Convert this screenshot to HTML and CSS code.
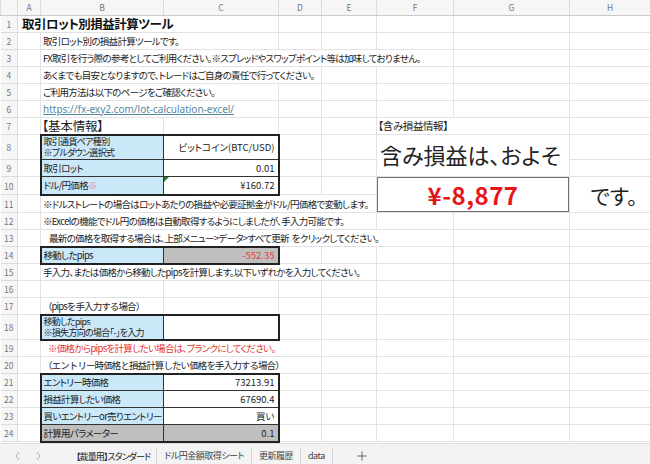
FILE: index.html
```html
<!DOCTYPE html>
<html lang="ja">
<head>
  <meta charset="UTF-8" />
  <meta name="viewport" content="width=device-width, initial-scale=1" />
  <title>取引ロット別損益計算ツール</title>
  <link rel="stylesheet" href="styles.css">
</head>
<body>
  <div class="book">
    <table class="sheet">
      <colgroup>
        <col class="c-rn"><col class="c-a"><col class="c-b"><col class="c-c"><col class="c-d">
        <col class="c-e"><col class="c-f"><col class="c-g"><col class="c-h">
      </colgroup>
      <thead>
        <tr class="colhead">
          <th class="corner"></th><th>A</th><th>B</th><th>C</th><th>D</th><th>E</th><th>F</th><th>G</th><th>H</th>
        </tr>
      </thead>
      <tbody>
        <tr><th>1</th><td colspan="3" class="title">取引ロット別損益計算ツール</td><td></td><td></td><td></td><td></td><td></td></tr>
        <tr><th>2</th><td></td><td colspan="2">取引ロット別の損益計算ツールです。</td><td></td><td></td><td></td><td></td><td></td></tr>
        <tr><th>3</th><td></td><td colspan="5">FX取引を行う際の参考としてご利用ください。※スプレッドやスワップポイント等は加味しておりません。</td><td></td><td></td></tr>
        <tr><th>4</th><td></td><td colspan="3">あくまでも目安となりますので、トレードはご自身の責任で行ってください。</td><td></td><td></td><td></td><td></td></tr>
        <tr><th>5</th><td></td><td colspan="2">ご利用方法は以下のページをご確認ください。</td><td></td><td></td><td></td><td></td><td></td></tr>
        <tr><th>6</th><td></td><td colspan="2"><a class="link" href="#">https://fx-exy2.com/lot-calculation-excel/</a></td><td></td><td></td><td></td><td></td><td></td></tr>
        <tr><th>7</th><td></td><td class="heading">【基本情報】</td><td></td><td></td><td></td><td colspan="2" class="subhead">【含み損益情報】</td><td></td></tr>
        <tr class="tall">
          <th>8</th><td></td>
          <td class="lbl two t-top t-left">取引通貨ペア種別<br>※プルダウン選択式</td>
          <td class="val t-top t-right">ビットコイン(BTC/USD)</td>
          <td></td><td></td>
          <td colspan="2" rowspan="2" class="big">含み損益は、およそ</td>
          <td></td>
        </tr>
        <tr><th>9</th><td></td><td class="lbl t-left">取引ロット</td><td class="val t-right">0.01</td><td></td><td></td><td></td></tr>
        <tr>
          <th>10</th><td></td>
          <td class="lbl t-left t-bottom">ドル/円価格<span class="pink">※</span></td>
          <td class="val t-right t-bottom flagged">¥160.72</td>
          <td></td><td></td>
          <td colspan="2" rowspan="2" class="pl-cell"><div class="pl">¥-8,877</div></td>
          <td rowspan="2" class="desu">です。</td>
        </tr>
        <tr><th>11</th><td></td><td colspan="4">※ドルストレートの場合はロットあたりの損益や必要証拠金がドル/円価格で変動します。</td></tr>
        <tr><th>12</th><td></td><td colspan="4">※Excelの機能でドル円の価格は自動取得するようにしましたが、手入力可能です。</td><td></td><td></td><td></td></tr>
        <tr><th>13</th><td></td><td colspan="5" class="indent">最新の価格を取得する場合は、上部メニュー&gt;データ&gt;すべて更新&nbsp;&nbsp;をクリックしてください。</td><td></td><td></td></tr>
        <tr><th>14</th><td></td><td class="lbl t-all-l">移動したpips</td><td class="val gray red t-all-r">-552.35</td><td></td><td></td><td></td><td></td><td></td></tr>
        <tr><th>15</th><td></td><td colspan="4">手入力、または価格から移動したpipsを計算します。以下いずれかを入力してください。</td><td></td><td></td><td></td></tr>
        <tr><th>16</th><td></td><td></td><td></td><td></td><td></td><td></td><td></td><td></td></tr>
        <tr><th>17</th><td></td><td><span class="uline">（pipsを手入力する場合）</span></td><td></td><td></td><td></td><td></td><td></td><td></td></tr>
        <tr class="tall"><th>18</th><td></td><td class="lbl two t-all-l">移動したpips<br>※損失方向の場合「-」を入力</td><td class="val t-all-r"></td><td></td><td></td><td></td><td></td><td></td></tr>
        <tr><th>19</th><td></td><td colspan="3" class="warn">※価格からpipsを計算したい場合は、ブランクにしてください。</td><td></td><td></td><td></td><td></td></tr>
        <tr><th>20</th><td></td><td colspan="3"><span class="uline">（エントリー時価格と損益計算したい価格を手入力する場合）</span></td><td></td><td></td><td></td><td></td></tr>
        <tr><th>21</th><td></td><td class="lbl t-top t-left">エントリー時価格</td><td class="val t-top t-right">73213.91</td><td></td><td></td><td></td><td></td><td></td></tr>
        <tr><th>22</th><td></td><td class="lbl t-left">損益計算したい価格</td><td class="val t-right">67690.4</td><td></td><td></td><td></td><td></td><td></td></tr>
        <tr><th>23</th><td></td><td class="lbl t-left">買いエントリーor売りエントリー</td><td class="val t-right">買い</td><td></td><td></td><td></td><td></td><td></td></tr>
        <tr><th>24</th><td></td><td class="lbl gray t-left t-bottom">計算用パラメーター</td><td class="val gray t-right t-bottom">0.1</td><td></td><td></td><td></td><td></td><td></td></tr>
      </tbody>
    </table>

    <div class="tabs">
      <span class="nav"><svg width="8" height="10" viewBox="0 0 8 10"><polyline points="5,1 2,5 5,9" fill="none" stroke="#aaa" stroke-width="1"/></svg></span>
      <span class="nav"><svg width="8" height="10" viewBox="0 0 8 10"><polyline points="3,1 6,5 3,9" fill="none" stroke="#aaa" stroke-width="1"/></svg></span>
      <span class="tab active">【裁量用】スタンダード</span>
      <span class="tab">ドル円金額取得シート</span>
      <span class="tab">更新履歴</span>
      <span class="tab">data</span>
      <span class="add"><svg width="10" height="10" viewBox="0 0 10 10"><path d="M5 0.5V9.5M0.5 5H9.5" stroke="#666" stroke-width="1"/></svg></span>
    </div>
  </div>
</body>
</html>
```

FILE: styles.css
```css
body {
  margin: 0;
  font-family: "Noto Sans CJK JP", "Noto Sans", sans-serif;
  font-feature-settings: "palt";
  font-size: 9.5px;
  letter-spacing: -0.7px;
  color: #222;
  background: #fff;
  overflow: hidden;
}
.book {
  width: 650px;
  height: 464px;
  overflow: hidden;
}
.sheet {
  border-collapse: collapse;
  table-layout: fixed;
  width: 650px;
}
.c-rn { width: 17px; }
.c-a { width: 23px; }
.c-b { width: 123px; }
.c-c { width: 115px; }
.c-d { width: 43px; }
.c-e { width: 55px; }
.c-f { width: 77px; }
.c-g { width: 116px; }
.c-h { width: 81px; }

.sheet tr { height: 17px; }
.sheet tr.tall { height: 25px; }
.sheet tr.colhead { height: 15px; }

.sheet td, .sheet th {
  border: 1px solid #e2e2e2;
  padding: 0 2px;
  white-space: nowrap;
  overflow: hidden;
  line-height: 12px;
  text-align: left;
  vertical-align: middle;
}
.sheet th {
  background: #f6f6f6;
  color: #777;
  font-weight: normal;
  font-size: 8.5px;
  letter-spacing: 0;
  text-align: center;
  padding: 0;
  border-color: #dcdcdc;
}
.colhead th {
  border-top: none;
  border-bottom-color: #c9c9c9;
}
.sheet tbody th { border-left: none; }

.sheet .title {
  font-size: 12.5px;
  font-weight: bold;
  letter-spacing: -0.5px;
  padding-left: 4px;
  color: #111;
}
.link {
  color: #55899f;
  font-family: "Noto Sans", sans-serif;
  letter-spacing: 0;
  text-decoration: underline;
  font-size: 10px;
}
.sheet .heading {
  font-size: 12.5px;
  line-height: 16px;
  letter-spacing: -0.2px;
  padding-left: 1px;
}
.sheet .subhead { font-size: 10.5px; letter-spacing: -0.4px; padding-left: 1px; }
.sheet .indent { padding-left: 8px; }
.sheet .warn { color: #e4342f; padding-left: 7px; }
.uline {
  border-bottom: 1px solid #333;
  padding-bottom: 1px;
  font-feature-settings: normal;
  letter-spacing: -0.9px;
}

/* input tables */
.lbl { background: #cbe8f8; }
.sheet .two { font-size: 9px; line-height: 11.5px; }
.sheet .val {
  text-align: right;
  padding-right: 3px;
  letter-spacing: 0;
}
.gray { background: #bfbfbf; }
.red { color: #e34234; }
.pink { color: #f07aa0; }
.sheet .t-top { border-top: 2px solid #222; }
.sheet .t-left { border-left: 2px solid #222; border-right: 1px solid #333; border-bottom-color: #333; }
.sheet .t-right { border-right: 2px solid #222; border-bottom-color: #333; }
.sheet .t-bottom { border-bottom: 2px solid #222; }
.sheet .t-all-l { border: 2px solid #222; border-right: 1px solid #333; }
.sheet .t-all-r { border: 2px solid #222; border-left: 1px solid #333; }
.flagged { position: relative; }
.flagged::before {
  content: "";
  position: absolute;
  left: 0;
  top: 0;
  border-top: 5px solid #2e7d32;
  border-right: 5px solid transparent;
}

/* unrealized P/L block */
.sheet .big {
  font-size: 22px;
  line-height: 24px;
  letter-spacing: 0;
  padding-left: 3px;
  padding-bottom: 4px;
  color: #222;
}
.sheet .pl-cell { padding: 0; }
.pl {
  height: 33px;
  border: 1px solid #707070;
  display: flex;
  align-items: center;
  justify-content: center;
  color: #e8141b;
  font-weight: bold;
  font-size: 24px;
  letter-spacing: 0.5px;
}
.sheet .desu {
  font-size: 21px;
  letter-spacing: 0;
  text-align: center;
  padding-left: 10px;
  color: #222;
}

/* sheet tabs */
.tabs {
  height: 25px;
  background: #f3f3f3;
  border-top: 1px solid #dedede;
  display: flex;
  align-items: center;
  color: #444;
  font-size: 9px;
  letter-spacing: -0.5px;
}
.nav {
  width: 20px;
  display: flex;
  justify-content: center;
}
.nav:first-child { margin-left: 8px; }
.tab {
  padding: 0 7px;
  height: 14px;
  line-height: 14px;
  border-right: 1px solid #d0d0d0;
}
.tab.active {
  margin-left: 26px;
  padding: 0 4px 0 2px;
  height: 25px;
  line-height: 25px;
  letter-spacing: -0.9px;
  color: #222;
  border-right: none;
  position: relative;
}
.tab.active::after {
  content: "";
  position: absolute;
  left: 3px;
  right: 4px;
  bottom: 2px;
  height: 2px;
  background: #1f7244;
}
.tab.active + .tab { border-left: 1px solid #d0d0d0; margin-left: 2px; }
.add {
  margin-left: 24px;
  display: flex;
  align-items: center;
}
```
